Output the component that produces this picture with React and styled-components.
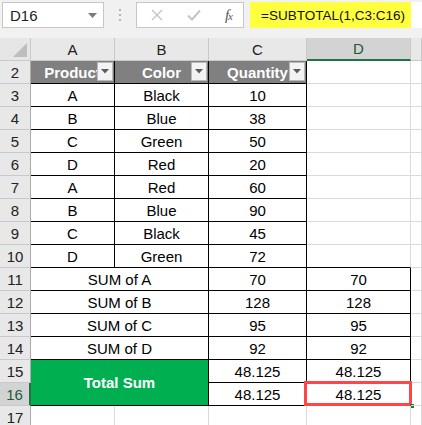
import React from "react";
import styled, { createGlobalStyle } from "styled-components";

const GlobalStyle = createGlobalStyle`
  html, body {
    margin: 0;
    padding: 0;
    background: #ffffff;
  }
  body {
    font-family: "Liberation Sans", Arial, sans-serif;
  }
`;

const COLS = ["A", "B", "C", "D", ""];

const rows = [
  ["A", "Black", "10"],
  ["B", "Blue", "38"],
  ["C", "Green", "50"],
  ["D", "Red", "20"],
  ["A", "Red", "60"],
  ["B", "Blue", "90"],
  ["C", "Black", "45"],
  ["D", "Green", "72"],
];

const sums = [
  ["SUM of A", "70"],
  ["SUM of B", "128"],
  ["SUM of C", "95"],
  ["SUM of D", "92"],
];

const FilterButton = () => (
  <Filter>
    <svg width="8" height="5" viewBox="0 0 8 5">
      <path d="M0 0 L8 0 L4 4.5 Z" fill="#5b5b5b" />
    </svg>
  </Filter>
);

const App = () => {
  return (
    <Page>
      <GlobalStyle />
      <FormulaBar>
        <NameBox>
          D16
          <svg width="9" height="5" viewBox="0 0 9 5">
            <path d="M0 0 L9 0 L4.5 5 Z" fill="#7a7a7a" />
          </svg>
        </NameBox>
        <Grip>
          <span />
          <span />
          <span />
        </Grip>
        <ButtonsBox>
          <svg width="12" height="12" viewBox="0 0 12 12">
            <path d="M1 1 L11 11 M11 1 L1 11" stroke="#c4c4c4" strokeWidth="1.4" />
          </svg>
          <svg width="14" height="12" viewBox="0 0 14 12">
            <path d="M1 6.5 L5 10.5 L13 1.5" stroke="#c4c4c4" strokeWidth="2" fill="none" />
          </svg>
          <Fx>
            f<sub>x</sub>
          </Fx>
        </ButtonsBox>
        <FormulaInput>
          <Highlight>=SUBTOTAL(1,C3:C16)</Highlight>
        </FormulaInput>
      </FormulaBar>

      <Sheet>
        <Corner>
          <svg width="14" height="14" viewBox="0 0 14 14">
            <path d="M14 0 L14 14 L0 14 Z" fill="#bdbdbd" />
          </svg>
        </Corner>
        {COLS.map((c, i) => (
          <ColHead key={i} $active={c === "D"}>
            {c}
          </ColHead>
        ))}

        <RowHead>2</RowHead>
        <HeadCell $br $bb>
          Product
          <FilterButton />
        </HeadCell>
        <HeadCell $br $bb>
          Color
          <FilterButton />
        </HeadCell>
        <HeadCell $br $bb>
          Quantity
          <FilterButton />
        </HeadCell>
        <Cell />
        <Cell />

        {rows.map((r, i) => (
          <React.Fragment key={i}>
            <RowHead>{i + 3}</RowHead>
            <Cell $br $bb>{r[0]}</Cell>
            <Cell $br $bb>{r[1]}</Cell>
            <Cell $br $bb>{r[2]}</Cell>
            <Cell $bb={i === rows.length - 1} />
            <Cell />
          </React.Fragment>
        ))}

        {sums.map((s, i) => (
          <React.Fragment key={i}>
            <RowHead>{i + 11}</RowHead>
            <Cell $br $bb $span={2}>
              {s[0]}
            </Cell>
            <Cell $br $bb>{s[1]}</Cell>
            <Cell $br $bb>{s[1]}</Cell>
            <Cell />
          </React.Fragment>
        ))}

        <RowHead>15</RowHead>
        <TotalCell>Total Sum</TotalCell>
        <Cell $br $bb>48.125</Cell>
        <Cell $br $bb>48.125</Cell>
        <Cell />

        <RowHead $active>16</RowHead>
        <Cell $br $bb>48.125</Cell>
        <Cell $br $bb>
          48.125
          <Selection />
          <Handle />
        </Cell>
        <Cell />

        <RowHead>17</RowHead>
        <Cell />
        <Cell />
        <Cell />
        <Cell />
        <Cell />
      </Sheet>
    </Page>
  );
};

const Page = styled.div`
  width: 422px;
  height: 425px;
  overflow: hidden;
  background: #ffffff;
  font-family: "Liberation Sans", Arial, sans-serif;
  color: #000000;
`;

const FormulaBar = styled.div`
  height: 38px;
  box-sizing: border-box;
  background: #f1f1f1;
  display: flex;
  align-items: flex-start;
  padding: 2px 0 0 2px;
`;

const NameBox = styled.div`
  width: 102px;
  height: 26px;
  box-sizing: border-box;
  background: #ffffff;
  border: 1px solid #c6c6c6;
  display: flex;
  align-items: center;
  justify-content: space-between;
  padding: 0 6px 0 7px;
  font-size: 15px;
  color: #222222;
`;

const Grip = styled.div`
  width: 32px;
  height: 26px;
  display: flex;
  flex-direction: column;
  align-items: center;
  justify-content: center;
  gap: 3px;

  span {
    width: 2px;
    height: 2px;
    background: #b5b5b5;
  }
`;

const ButtonsBox = styled.div`
  width: 108px;
  height: 26px;
  box-sizing: border-box;
  background: #ffffff;
  border: 1px solid #c6c6c6;
  display: flex;
  align-items: center;
  justify-content: space-between;
  padding: 0 10px 0 14px;
`;

const Fx = styled.span`
  font-family: "Liberation Serif", "Times New Roman", serif;
  font-style: italic;
  font-size: 15px;
  color: #555555;
  line-height: 1;

  sub {
    font-size: 11px;
    vertical-align: 0;
    margin-left: -1px;
  }
`;

const FormulaInput = styled.div`
  flex: 1;
  height: 26px;
  margin-left: 6px;
  background: #ffffff;
  display: flex;
  align-items: stretch;
`;

const Highlight = styled.div`
  width: 161px;
  background: #ffff3f;
  display: flex;
  align-items: center;
  padding-left: 11px;
  box-sizing: border-box;
  font-size: 13.5px;
  color: #111111;
  white-space: nowrap;
  overflow: hidden;
`;

const Sheet = styled.div`
  display: grid;
  grid-template-columns: 31px 84px 94px 98px 104px 11px;
  grid-auto-rows: 23px;
`;

const Corner = styled.div`
  background: #e6e6e6;
  box-sizing: border-box;
  border-right: 1px solid #c9c9c9;
  border-bottom: 1px solid #c9c9c9;
  display: flex;
  align-items: flex-end;
  justify-content: flex-end;
  padding: 0 3px 3px 0;
`;

const ColHead = styled.div`
  box-sizing: border-box;
  background: ${(p) => (p.$active ? "#d3d3d3" : "#e8e8e8")};
  border-right: 1px solid #c9c9c9;
  border-bottom: ${(p) => (p.$active ? "2px solid #217346" : "1px solid #c9c9c9")};
  display: flex;
  align-items: center;
  justify-content: center;
  font-size: 15px;
  color: ${(p) => (p.$active ? "#1d5a3b" : "#222222")};
`;

const RowHead = styled.div`
  box-sizing: border-box;
  background: ${(p) => (p.$active ? "#d3d3d3" : "#e8e8e8")};
  border-right: ${(p) => (p.$active ? "2px solid #217346" : "1px solid #ababab")};
  border-bottom: 1px solid #c9c9c9;
  display: flex;
  align-items: center;
  justify-content: center;
  font-size: 15px;
  color: ${(p) => (p.$active ? "#1d5a3b" : "#222222")};
`;

const Cell = styled.div`
  position: relative;
  box-sizing: border-box;
  grid-column: ${(p) => (p.$span ? `span ${p.$span}` : "auto")};
  border-right: 1px solid ${(p) => (p.$br ? "#000000" : "#dadada")};
  border-bottom: 1px solid ${(p) => (p.$bb ? "#000000" : "#dadada")};
  display: flex;
  align-items: center;
  justify-content: center;
  font-size: 15px;
  white-space: nowrap;
`;

const HeadCell = styled(Cell)`
  background: #808080;
  color: #ffffff;
  font-weight: bold;
  overflow: hidden;
`;

const Filter = styled.div`
  position: absolute;
  right: 1px;
  top: 1px;
  width: 16px;
  height: 19px;
  box-sizing: border-box;
  background: #f3f3f3;
  border: 1px solid #b9b9b9;
  display: flex;
  align-items: center;
  justify-content: center;
`;

const TotalCell = styled(Cell).attrs({ $br: true, $bb: true })`
  grid-column: span 2;
  grid-row: span 2;
  background: #00b050;
  color: #ffffff;
  font-weight: bold;
`;

const Selection = styled.div`
  position: absolute;
  left: -3px;
  top: -2px;
  right: -2px;
  bottom: -1px;
  border: 3px solid #ff4545;
  pointer-events: none;
`;

const Handle = styled.div`
  position: absolute;
  right: -4px;
  bottom: -3px;
  width: 4px;
  height: 4px;
  background: #217346;
`;

export default App;
